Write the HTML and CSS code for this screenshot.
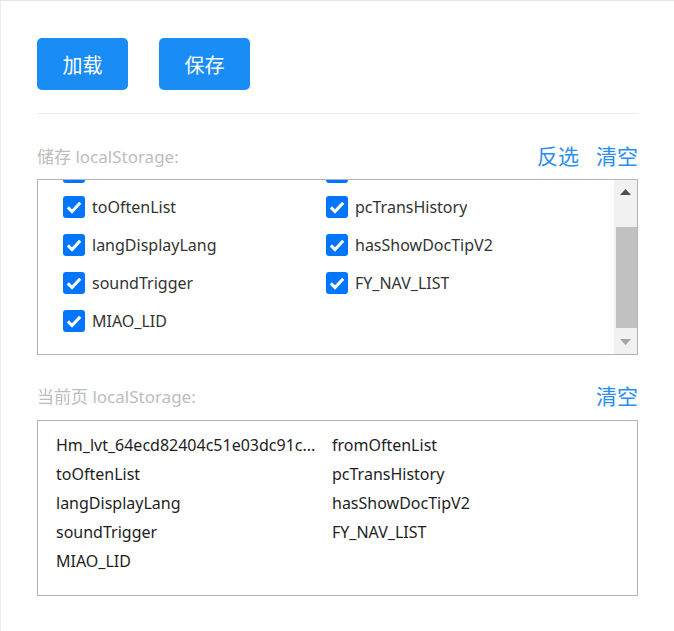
FILE: index.html
```html
<!DOCTYPE html>
<html lang="zh-CN">
<head>
<meta charset="utf-8">
<title>localStorage</title>
<link rel="stylesheet" href="styles.css">
</head>
<body>
<div class="page">
  <div class="actions">
    <button class="btn">加载</button>
    <button class="btn">保存</button>
  </div>
  <div class="divider"></div>

  <div class="section-head">
    <span class="label">储存 localStorage:</span>
    <span class="links"><a class="link">反选</a><a class="link">清空</a></span>
  </div>
  <div class="box list">
    <div class="viewport" id="stored">
      <div class="check-grid">
        <label class="item first"><span class="cb"><svg viewBox="0 0 21 21"><path d="M4.6 10.8 L8.6 14.8 L16.4 6.4"/></svg></span><span class="name">Hm_lvt_64ecd82404c51e03dc91cb9e8c025574</span></label>
        <label class="item first"><span class="cb"><svg viewBox="0 0 21 21"><path d="M4.6 10.8 L8.6 14.8 L16.4 6.4"/></svg></span><span class="name">fromOftenList</span></label>
        <label class="item"><span class="cb"><svg viewBox="0 0 21 21"><path d="M4.6 10.8 L8.6 14.8 L16.4 6.4"/></svg></span><span class="name">toOftenList</span></label>
        <label class="item"><span class="cb"><svg viewBox="0 0 21 21"><path d="M4.6 10.8 L8.6 14.8 L16.4 6.4"/></svg></span><span class="name">pcTransHistory</span></label>
        <label class="item"><span class="cb"><svg viewBox="0 0 21 21"><path d="M4.6 10.8 L8.6 14.8 L16.4 6.4"/></svg></span><span class="name">langDisplayLang</span></label>
        <label class="item"><span class="cb"><svg viewBox="0 0 21 21"><path d="M4.6 10.8 L8.6 14.8 L16.4 6.4"/></svg></span><span class="name">hasShowDocTipV2</span></label>
        <label class="item"><span class="cb"><svg viewBox="0 0 21 21"><path d="M4.6 10.8 L8.6 14.8 L16.4 6.4"/></svg></span><span class="name">soundTrigger</span></label>
        <label class="item"><span class="cb"><svg viewBox="0 0 21 21"><path d="M4.6 10.8 L8.6 14.8 L16.4 6.4"/></svg></span><span class="name">FY_NAV_LIST</span></label>
        <label class="item"><span class="cb"><svg viewBox="0 0 21 21"><path d="M4.6 10.8 L8.6 14.8 L16.4 6.4"/></svg></span><span class="name">MIAO_LID</span></label>
      </div>
    </div>
    <div class="scrollbar">
      <div class="sb-btn"><svg width="11" height="6" viewBox="0 0 11 6"><path d="M0 6 L5.5 0 L11 6 Z" fill="#505050"/></svg></div>
      <div class="sb-track"><div class="sb-thumb"></div></div>
      <div class="sb-btn"><svg width="11" height="6" viewBox="0 0 11 6"><path d="M0 0 L11 0 L5.5 6 Z" fill="#a3a3a3"/></svg></div>
    </div>
  </div>

  <div class="section-head second">
    <span class="label">当前页 localStorage:</span>
    <span class="links"><a class="link">清空</a></span>
  </div>
  <div class="box current">
    <div class="text-grid">
      <span class="key">Hm_lvt_64ecd82404c51e03dc91c...</span>
      <span class="key">fromOftenList</span>
      <span class="key">toOftenList</span>
      <span class="key">pcTransHistory</span>
      <span class="key">langDisplayLang</span>
      <span class="key">hasShowDocTipV2</span>
      <span class="key">soundTrigger</span>
      <span class="key">FY_NAV_LIST</span>
      <span class="key">MIAO_LID</span>
    </div>
  </div>
</div>
<script src="script.js"></script>
</body>
</html>
```

FILE: styles.css
```css
html, body {
  margin: 0;
  padding: 0;
  background: #fff;
}

body {
  font-family: "Noto Sans", "Noto Sans CJK SC", sans-serif;
  color: #222;
}

.page {
  width: 674px;
  height: 631px;
  box-sizing: border-box;
  border-top: 1px solid #e4e4e4;
  border-left: 1px solid #ececec;
  padding: 37px 36px 0 36px;
  overflow: hidden;
}

.actions {
  display: flex;
  gap: 31px;
}

.btn {
  width: 91px;
  height: 52px;
  border: none;
  border-radius: 5px;
  background: #1a8cf6;
  color: #fff;
  font-family: "Noto Sans CJK SC", sans-serif;
  font-size: 20px;
  padding: 0;
  cursor: pointer;
}

.divider {
  margin-top: 23px;
  height: 1px;
  background: #e8e8e8;
}

.section-head {
  display: flex;
  justify-content: space-between;
  align-items: center;
  height: 28px;
  margin-top: 27px;
}

.section-head.second {
  margin-top: 26px;
}

.label {
  font-family: "Noto Sans", "Noto Sans CJK SC", sans-serif;
  font-size: 17px;
  color: #bdbdbd;
}

.links {
  display: flex;
  gap: 17px;
}

.link {
  font-family: "Noto Sans CJK SC", sans-serif;
  font-size: 21px;
  color: #2b8ef0;
  cursor: pointer;
}

.box {
  margin-top: 10px;
  height: 176px;
  box-sizing: border-box;
  border: 1px solid #b4b4b4;
}

.current {
  margin-top: 11px;
}

.list {
  display: flex;
}

.viewport {
  flex: 1;
  min-width: 0;
  overflow: hidden;
}

.scrollbar {
  flex: none;
  width: 23px;
  background: #f1f1f1;
  display: flex;
  flex-direction: column;
}

.sb-btn {
  height: 24px;
  flex: none;
  display: flex;
  align-items: center;
  justify-content: center;
}

.sb-track {
  flex: 1;
  padding-top: 23px;
}

.sb-thumb {
  height: 101px;
  margin-left: 2px;
  background: #c1c1c1;
}

.check-grid {
  display: grid;
  grid-template-columns: 263px 263px;
  padding: 10px 0 17px 25px;
}

.item {
  display: flex;
  align-items: center;
  gap: 7px;
  height: 38px;
  min-width: 0;
}

.item.first .cb {
  margin-top: 6px;
}

.cb {
  flex: none;
  width: 22px;
  height: 22px;
  border-radius: 3px;
  background: #0075ff;
  display: flex;
}

.cb svg {
  width: 22px;
  height: 22px;
}

.cb path {
  fill: none;
  stroke: #fff;
  stroke-width: 3;
  stroke-linecap: butt;
  stroke-linejoin: miter;
}

.name {
  font-size: 16px;
  color: #333;
  white-space: nowrap;
  overflow: hidden;
  text-overflow: ellipsis;
}

.text-grid {
  display: grid;
  grid-template-columns: 276px 276px;
  padding: 10px 18px;
}

.key {
  font-size: 16px;
  line-height: 29px;
  color: #1e1e1e;
  white-space: nowrap;
}
```

FILE: script.js
```js
document.getElementById('stored').scrollTop = 40;
```
